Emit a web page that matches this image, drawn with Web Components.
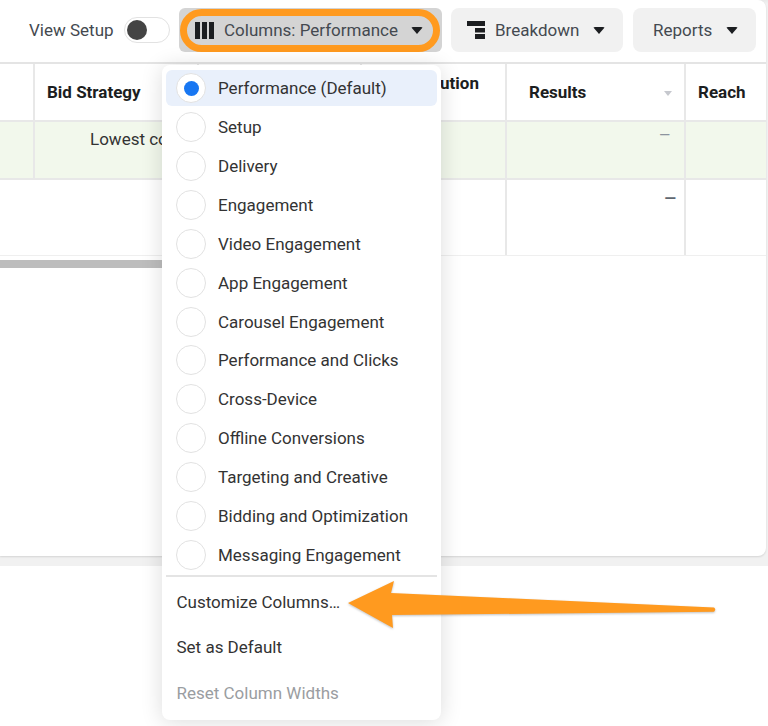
<!DOCTYPE html>
<html lang="en">
<head>
<meta charset="utf-8">
<title>Columns menu</title>
<style>
  html, body { margin: 0; background: #fff; }
  body { width: 768px; height: 726px; overflow: hidden; position: relative; font-family: Roboto, "Liberation Sans", sans-serif; color: #1c1e21; }
</style>
</head>
<body>
  <ad-card>
    <ad-toolbar></ad-toolbar>
    <ad-table></ad-table>
  </ad-card>
  <columns-menu>
    <menu-radio selected>Performance (Default)</menu-radio>
    <menu-radio>Setup</menu-radio>
    <menu-radio>Delivery</menu-radio>
    <menu-radio>Engagement</menu-radio>
    <menu-radio>Video Engagement</menu-radio>
    <menu-radio>App Engagement</menu-radio>
    <menu-radio>Carousel Engagement</menu-radio>
    <menu-radio>Performance and Clicks</menu-radio>
    <menu-radio>Cross-Device</menu-radio>
    <menu-radio>Offline Conversions</menu-radio>
    <menu-radio>Targeting and Creative</menu-radio>
    <menu-radio>Bidding and Optimization</menu-radio>
    <menu-radio>Messaging Engagement</menu-radio>
  </columns-menu>
  <callout-arrow></callout-arrow>

<script>
// White report card with the grey band under it
class AdCard extends HTMLElement {
  constructor() {
    super();
    this.attachShadow({ mode: 'open' }).innerHTML = `
      <style>
        :host { display: block; width: 768px; height: 566px; background: linear-gradient(#e9e9e9, #f1f1f1 4px); }
        .card { width: 766px; height: 556px; background: #fff; border-radius: 0 8px 8px 0; box-shadow: 0 1px 2px rgba(0,0,0,.12); }
      </style>
      <div class="card"><slot></slot></div>`;
  }
}
customElements.define('ad-card', AdCard);

// Toolbar button: icon, label, caret
class ToolButton extends HTMLElement {
  constructor() {
    super();
    this.attachShadow({ mode: 'open' }).innerHTML = `
      <style>
        :host { display: flex; align-items: center; box-sizing: border-box; height: 44px; background: #f1f1f1; border-radius: 8px; padding: 0 15px 0 16px; font-size: 17px; color: #444950; white-space: nowrap; }
        ::slotted(svg) { margin-right: 10px; }
        .caret { margin-left: var(--caret-gap, 14px); width: 0; height: 0; border: 6.5px solid transparent; border-top: 7px solid #1c1e21; border-bottom: 0; border-radius: 2px; }
      </style>
      <slot name="icon"></slot><span><slot></slot></span><span class="caret"></span>`;
  }
}
customElements.define('tool-button', ToolButton);

// Top bar with the switch and the three buttons
class AdToolbar extends HTMLElement {
  constructor() {
    super();
    this.attachShadow({ mode: 'open' }).innerHTML = `
      <style>
        :host { display: flex; align-items: center; box-sizing: border-box; height: 64px; padding: 0 10px 2px 29px; border-bottom: 2px solid #e4e4e4; font-size: 17px; color: #444950; }
        .label { width: 85px; white-space: nowrap; }
        .toggle { box-sizing: border-box; width: 46px; height: 26px; margin: 0 9px 0 10px; border: 1.5px solid #e2e2e2; border-radius: 13px; padding: 1.5px; }
        .toggle i { display: block; width: 20px; height: 20px; border-radius: 50%; background: #444; }
        .focus { display: flex; align-items: center; box-sizing: border-box; height: 44px; width: 263px; background: #d4d4d4; border-radius: 6px; margin-right: 9px; }
        .ring { box-sizing: border-box; width: 260px; height: 43px; margin-left: 1px; border: 7px solid #ff9a1f; border-radius: 22px; display: flex; align-items: center; }
        .ring tool-button { --caret-gap: 13px; background: transparent; width: 100%; height: 29px; padding: 0 0 0 8px; }
        #breakdown { width: 172px; margin-right: 10px; }
        #reports { width: 123px; padding-left: 20px; }
      </style>
      <span class="label">View Setup</span>
      <span class="toggle"><i></i></span>
      <div class="focus"><div class="ring">
        <tool-button>
          <svg slot="icon" width="19" height="17" viewBox="0 0 19 17"><path fill="#1c1e21" d="M0 0h5v17H0zM7 0h5v17H7zM14 0h5v17h-5z"/></svg>
          Columns: Performance
        </tool-button>
      </div></div>
      <tool-button id="breakdown">
        <svg slot="icon" width="18" height="18" viewBox="0 0 18 18"><path fill="#1c1e21" d="M0 0h18v5H0zM8 7h10v4.500H8zM8 13h10v5H8z"/></svg>
        Breakdown
      </tool-button>
      <tool-button id="reports">Reports</tool-button>`;
  }
}
customElements.define('ad-toolbar', AdToolbar);

// Report table, mostly hidden by the open menu
class AdTable extends HTMLElement {
  constructor() {
    super();
    this.attachShadow({ mode: 'open' }).innerHTML = `
      <style>
        :host { display: block; font-size: 17px; color: #1c1e21; }
        .row { display: grid; grid-template-columns: 35px 164px 163px 145px 179px 80px; border-bottom: 2px solid #e8e8e8; box-sizing: border-box; }
        .row > div { box-sizing: border-box; border-right: 2px solid #e8e8e8; position: relative; }
        .row > div:last-child { border-right: 0; }
        .head { height: 58px; font-weight: 700; }
        .head > div { display: flex; align-items: center; padding-left: 12px; white-space: nowrap; }
        .head .top { align-items: flex-start; padding-top: 10px; padding-left: 35px; line-height: 19px; overflow: hidden; }
        .head .sort { justify-content: space-between; padding: 0 12px 0 22px; }
        .sort i { width: 0; height: 0; border: 4px solid transparent; border-top: 5px solid #c6c8ce; border-bottom: 0; margin-top: 2px; }
        .green { height: 58px; background: #f2f8ec; }
        .plain { height: 76px; border-bottom-width: 1px; border-color: #efefef; }
        .plain > div:first-child { border-right: 0; }
        .bid { padding: 7px 0 0 55px; color: #333; white-space: nowrap; }
        .dash { text-align: right; color: #8d949e; }
        .green .dash { padding: 3px 14px 0 0; font-size: 14px; line-height: 20px; font-weight: 500; }
        .plain .dash { padding: 8px 8px 0 0; font-size: 15px; line-height: 20px; color: #606770; font-weight: 700; }
        .scroll { margin-top: 4px; width: 200px; height: 8px; background: #bdbdbd; }
      </style>
      <div class="row head">
        <div></div><div>Bid Strategy</div><div></div>
        <div class="top">Attribution</div>
        <div class="sort">Results<i></i></div>
        <div>Reach</div>
      </div>
      <div class="row green">
        <div></div><div class="bid">Lowest cost</div><div></div><div></div>
        <div class="dash">—</div><div></div>
      </div>
      <div class="row plain">
        <div></div><div></div><div></div><div></div>
        <div class="dash">—</div><div></div>
      </div>
      <div class="scroll"></div>`;
  }
}
customElements.define('ad-table', AdTable);

// One radio line of the menu
class MenuRadio extends HTMLElement {
  constructor() {
    super();
    this.attachShadow({ mode: 'open' }).innerHTML = `
      <style>
        :host { display: flex; align-items: center; box-sizing: border-box; height: 38.9px; padding-left: 10px; font-size: 17px; color: #333; }
        :host([selected]) { background: #e9f0fb; border-radius: 6px; height: 36px; margin: 0 0 1.7px; }
        .dot { box-sizing: border-box; flex: none; width: 30px; height: 30px; margin-right: 12px; background: #fff; border: 1.5px solid #e2e2e2; border-radius: 50%; display: flex; align-items: center; justify-content: center; }
        :host([selected]) .dot i { display: block; width: 15px; height: 15px; border-radius: 50%; background: #1877f2; }
      </style>
      <span class="dot"><i></i></span><span><slot></slot></span>`;
  }
}
customElements.define('menu-radio', MenuRadio);

// Open dropdown lying over the table
class ColumnsMenu extends HTMLElement {
  constructor() {
    super();
    this.attachShadow({ mode: 'open' }).innerHTML = `
      <style>
        :host { position: absolute; left: 162px; top: 65px; width: 279px; height: 655px; box-sizing: border-box; padding: 5px 4px 0; background: #fff; border-radius: 8px; box-shadow: 0 2px 22px rgba(0,0,0,.14); }
        .sep { height: 2px; background: #e4e4e4; margin-top: .5px; }
        .act { padding-left: 10.500px; font-size: 17px; color: #333; height: 45.500px; line-height: 46px; white-space: nowrap; }
        .off { color: #9a9da1; }
        .first { margin-top: 2px; }
      </style>
      <slot></slot>
      <div class="sep"></div>
      <div class="act first">Customize Columns…</div>
      <div class="act">Set as Default</div>
      <div class="act off">Reset Column Widths</div>`;
  }
}
customElements.define('columns-menu', ColumnsMenu);

// Orange annotation arrow drawn on top of the screenshot
class CalloutArrow extends HTMLElement {
  constructor() {
    super();
    this.attachShadow({ mode: 'open' }).innerHTML = `
      <style>
        :host { position: absolute; left: 340px; top: 570px; width: 390px; height: 70px; }
        svg { display: block; filter: drop-shadow(0 1px 1px rgba(0,0,0,.25)); }
      </style>
      <svg width="390" height="70" viewBox="340 570 390 70">
        <path fill="#ff9a1f" d="M348 603L394 581L391 593L714 607.500Q716.500 609.500 714 611.800L392 615L393 628Z"/>
      </svg>`;
  }
}
customElements.define('callout-arrow', CalloutArrow);
</script>
</body>
</html>
